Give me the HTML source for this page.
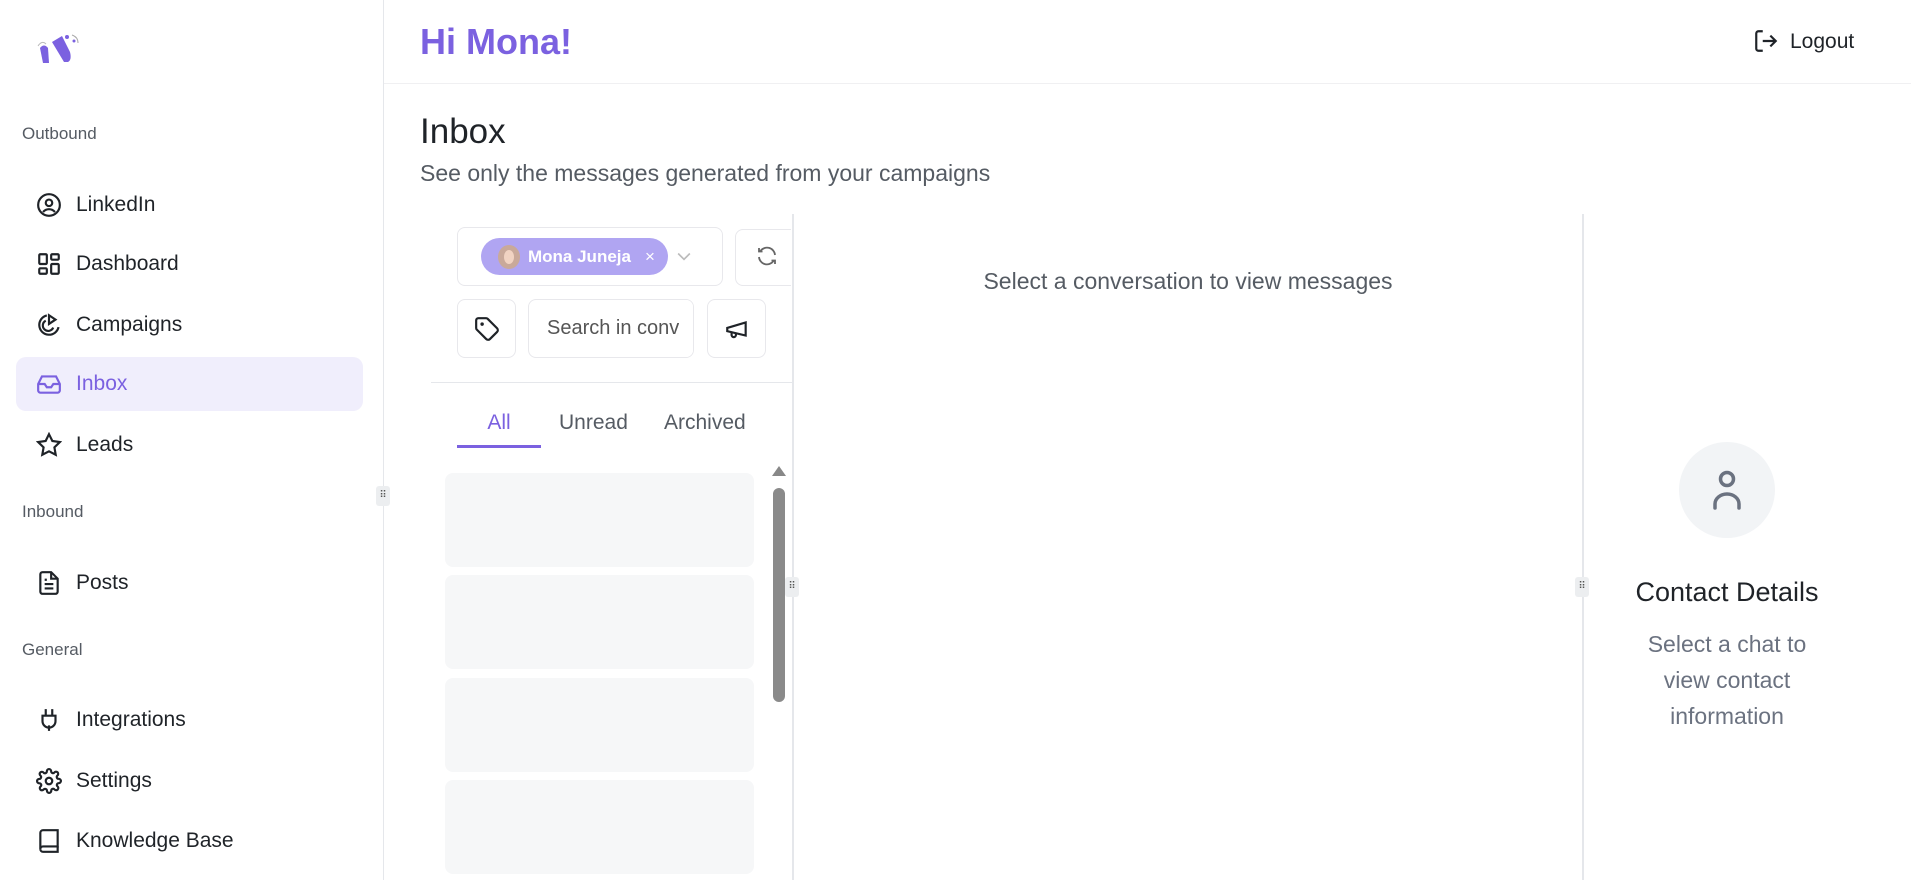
<!DOCTYPE html>
<html><head><meta charset="utf-8"><style>
*{margin:0;padding:0;box-sizing:border-box}
body{width:1911px;height:880px;overflow:hidden;background:#fff;font-family:"Liberation Sans",sans-serif;color:#1f2328;position:relative}
.a{position:absolute}
.lbl{position:absolute;left:22px;font-size:17px;color:#555b63}
.it{position:absolute;left:16px;width:347px;height:54px;display:flex;align-items:center;font-size:21px;color:#1f2328}
.it svg{position:absolute;left:20px;width:26px;height:26px}
.it span{position:absolute;left:60px}
.btn{position:absolute;border:1px solid #e8e8ec;border-radius:8px;background:#fff}
.sk{position:absolute;left:445px;width:309px;height:94px;background:#f6f7f8;border-radius:8px}
.hd{position:absolute;width:14px;height:20px;background:#eceef0;border-radius:3px;font-size:10px;color:#555;text-align:center;line-height:20px}
</style></head><body>
<!-- sidebar -->
<div class="a" style="left:383px;top:0;width:1px;height:880px;background:#e5e7eb"></div>
<svg class="a" style="left:34px;top:32px" width="50" height="34" viewBox="0 0 50 34"><path d="M4 14 q4-6 8-2" stroke="#bbb" fill="none" stroke-width="1"/><path d="M6 16 q4-5 8 0 l1 15 h-6z" fill="#7b61e0"/><path d="M18 10 l10-6 l8 16 q2 8 -2 10 h-4z" fill="#7b61e0"/><circle cx="33" cy="5" r="2" fill="#7b61e0"/><circle cx="40" cy="9" r="1.5" fill="#7b61e0"/><path d="M38 3 q6 2 6 8" stroke="#aaa" fill="none" stroke-width="1"/></svg>
<div class="lbl" style="top:124px">Outbound</div>
<div class="it" style="top:178px"><svg viewBox="0 0 24 24" fill="none" stroke="#1f2328" stroke-width="2"><circle cx="12" cy="12" r="10"/><circle cx="12" cy="10" r="3"/><path d="M6.5 18.5c3-3.5 8-3.5 11 0"/></svg><span>LinkedIn</span></div>
<div class="it" style="top:237px"><svg viewBox="0 0 24 24" fill="none" stroke="#1f2328" stroke-width="2"><rect x="3" y="3" width="7" height="9" rx="1"/><rect x="14" y="3" width="7" height="5" rx="1"/><rect x="14" y="12" width="7" height="9" rx="1"/><rect x="3" y="16" width="7" height="5" rx="1"/></svg><span>Dashboard</span></div>
<div class="it" style="top:298px"><svg viewBox="0 0 24 24" fill="none" stroke="#1f2328" stroke-width="2"><path d="M10 3.2A9 9 0 1 0 20.8 14"/><path d="M9 8a5 5 0 1 0 6.9 6.4"/><path d="M12 3v8l6-4z"/></svg><span>Campaigns</span></div>
<div class="it" style="top:357px;background:#f0eefc;border-radius:10px;color:#7b61e0"><svg viewBox="0 0 24 24" fill="none" stroke="#7b61e0" stroke-width="2"><path d="M22 12h-6l-2 3h-4l-2-3H2"/><path d="M5.5 5h13L22 12v6a2 2 0 0 1-2 2H4a2 2 0 0 1-2-2v-6z"/></svg><span>Inbox</span></div>
<div class="it" style="top:418px"><svg viewBox="0 0 24 24" fill="none" stroke="#1f2328" stroke-width="2"><path d="M12 2l3.1 6.3 6.9 1-5 4.9 1.2 6.8L12 17.8 5.8 21l1.2-6.8-5-4.9 6.9-1z"/></svg><span>Leads</span></div>
<div class="lbl" style="top:502px">Inbound</div>
<div class="it" style="top:556px"><svg viewBox="0 0 24 24" fill="none" stroke="#1f2328" stroke-width="2"><path d="M14 2H6a2 2 0 0 0-2 2v16a2 2 0 0 0 2 2h12a2 2 0 0 0 2-2V8z"/><path d="M14 2v6h6M16 13H8M16 17H8M10 9H8"/></svg><span>Posts</span></div>
<div class="lbl" style="top:640px">General</div>
<div class="it" style="top:693px"><svg viewBox="0 0 24 24" fill="none" stroke="#1f2328" stroke-width="2"><path d="M12 22v-5M9 8V2M15 8V2M18 8v5a6 6 0 0 1-12 0V8z"/></svg><span>Integrations</span></div>
<div class="it" style="top:754px"><svg viewBox="0 0 24 24" fill="none" stroke="#1f2328" stroke-width="2"><circle cx="12" cy="12" r="3"/><path d="M19.4 15a1.7 1.7 0 0 0 .3 1.8l.1.1a2 2 0 1 1-2.8 2.8l-.1-.1a1.7 1.7 0 0 0-1.8-.3 1.7 1.7 0 0 0-1 1.5V21a2 2 0 1 1-4 0v-.1a1.7 1.7 0 0 0-1.1-1.5 1.7 1.7 0 0 0-1.8.3l-.1.1a2 2 0 1 1-2.8-2.8l.1-.1a1.7 1.7 0 0 0 .3-1.8 1.7 1.7 0 0 0-1.5-1H3a2 2 0 1 1 0-4h.1a1.7 1.7 0 0 0 1.5-1.1 1.7 1.7 0 0 0-.3-1.8l-.1-.1a2 2 0 1 1 2.8-2.8l.1.1a1.7 1.7 0 0 0 1.8.3H9a1.7 1.7 0 0 0 1-1.5V3a2 2 0 1 1 4 0v.1a1.7 1.7 0 0 0 1 1.5 1.7 1.7 0 0 0 1.8-.3l.1-.1a2 2 0 1 1 2.8 2.8l-.1.1a1.7 1.7 0 0 0-.3 1.8V9a1.7 1.7 0 0 0 1.5 1H21a2 2 0 1 1 0 4h-.1a1.7 1.7 0 0 0-1.5 1z"/></svg><span>Settings</span></div>
<div class="it" style="top:814px"><svg viewBox="0 0 24 24" fill="none" stroke="#1f2328" stroke-width="2"><path d="M4 19.5A2.5 2.5 0 0 1 6.5 17H20V2H6.5A2.5 2.5 0 0 0 4 4.5z"/><path d="M4 19.5A2.5 2.5 0 0 0 6.5 22H20v-5"/></svg><span>Knowledge Base</span></div>
<div class="hd" style="left:376px;top:486px">⠿</div>
<!-- header -->
<div class="a" style="left:384px;top:83px;width:1527px;height:1px;background:#f0f0f2"></div>
<div class="a" style="left:420px;top:21px;font-size:36px;font-weight:bold;color:#7b61e0">Hi Mona!</div>
<svg class="a" style="left:1753px;top:28px" width="26" height="26" viewBox="0 0 24 24" fill="none" stroke="#1f2328" stroke-width="2"><path d="M9 21H5a2 2 0 0 1-2-2V5a2 2 0 0 1 2-2h4M16 17l5-5-5-5M21 12H9"/></svg>
<div class="a" style="left:1790px;top:30px;font-size:21px">Logout</div>
<div class="a" style="left:420px;top:112px;font-size:35px">Inbox</div>
<div class="a" style="left:420px;top:160px;font-size:23px;color:#555b63">See only the messages generated from your campaigns</div>
<!-- list column -->
<div class="a" style="left:792px;top:214px;width:2px;height:666px;background:#e5e7eb"></div>
<div class="a" style="left:1582px;top:214px;width:2px;height:666px;background:#e5e7eb"></div>
<div class="btn" style="left:457px;top:227px;width:266px;height:59px"></div>
<div class="a" style="left:481px;top:238px;width:187px;height:37px;border-radius:19px;background:#b0a5f2;display:flex;align-items:center">
  <div style="margin-left:17px;width:22px;height:24px;border-radius:50%;background:#c9a99a;overflow:hidden"><div style="margin:5px auto 0;width:10px;height:14px;border-radius:50%;background:#f1d3c2"></div></div>
  <div style="margin-left:8px;font-size:17px;font-weight:bold;color:#fff">Mona Juneja</div>
  <div style="margin-left:14px;font-size:17px;color:#fff">×</div>
</div>
<svg class="a" style="left:673px;top:246px" width="22" height="20" viewBox="0 0 24 24" fill="none" stroke="#bbb" stroke-width="2"><path d="M5 9l7 7 7-7"/></svg>
<div class="a" style="left:735px;top:227px;width:56px;height:62px;overflow:hidden">
  <div class="btn" style="left:0;top:2px;width:80px;height:57px"></div>
  <svg class="a" style="left:20px;top:17px" width="24" height="24" viewBox="0 0 24 24" fill="none" stroke="#666" stroke-width="1.8"><path d="M20 11A8 8 0 0 0 5.5 7M4 4v3.5h3.5M4 13a8 8 0 0 0 14.5 4M20 20v-3.5h-3.5"/></svg>
</div>
<div class="btn" style="left:457px;top:299px;width:59px;height:59px"></div>
<svg class="a" style="left:474px;top:316px" width="26" height="26" viewBox="0 0 24 24" fill="none" stroke="#1f2328" stroke-width="2"><path d="M12.6 2.6A2 2 0 0 0 11.2 2H4a2 2 0 0 0-2 2v7.2a2 2 0 0 0 .6 1.4l8.7 8.7a2.4 2.4 0 0 0 3.4 0l6.6-6.6a2.4 2.4 0 0 0 0-3.4z"/><circle cx="7.5" cy="7.5" r=".6" fill="#1f2328"/></svg>
<div class="btn" style="left:528px;top:299px;width:166px;height:59px;overflow:hidden"><div style="position:absolute;left:18px;top:17px;font-size:20px;color:#555;white-space:nowrap">Search in conv</div><div style="position:absolute;right:0;top:0;width:14px;height:57px;background:#fff"></div></div>
<div class="btn" style="left:707px;top:299px;width:59px;height:59px"></div>
<svg class="a" style="left:724px;top:316px" width="26" height="26" viewBox="0 0 24 24" fill="none" stroke="#1f2328" stroke-width="2"><path d="M3 11l17-5v12L3 14z"/><path d="M7 14.5v3a2 2 0 0 0 4 0v-1.7"/></svg>
<div class="a" style="left:431px;top:382px;width:361px;height:1px;background:#e5e7eb"></div>
<div class="a" style="left:457px;top:411px;width:84px;text-align:center;font-size:21px;color:#7b61e0">All</div>
<div class="a" style="left:457px;top:445px;width:84px;height:3px;background:#7b61e0"></div>
<div class="a" style="left:559px;top:411px;font-size:21px;color:#555b63">Unread</div>
<div class="a" style="left:664px;top:411px;font-size:21px;color:#555b63">Archived</div>
<div class="a" style="left:772px;top:466px;width:0;height:0;border-left:7px solid transparent;border-right:7px solid transparent;border-bottom:10px solid #888"></div>
<div class="a" style="left:773px;top:488px;width:12px;height:214px;border-radius:6px;background:#8a8a8a"></div>
<div class="sk" style="top:473px"></div><div class="sk" style="top:575px"></div><div class="sk" style="top:678px"></div><div class="sk" style="top:780px"></div>
<div class="hd" style="left:785px;top:577px">⠿</div>
<div class="hd" style="left:1575px;top:577px">⠿</div>
<!-- middle -->
<div class="a" style="left:794px;top:268px;width:788px;text-align:center;font-size:23px;color:#555b63">Select a conversation to view messages</div>
<!-- right -->
<div class="a" style="left:1679px;top:442px;width:96px;height:96px;border-radius:50%;background:#f2f4f6"></div>
<svg class="a" style="left:1709px;top:468px" width="36" height="44" viewBox="0 0 36 44" fill="none" stroke="#6b7280" stroke-width="3.5" stroke-linecap="round"><circle cx="18" cy="11" r="6.5"/><path d="M6 40v-4a12 10 0 0 1 24 0v4"/></svg>
<div class="a" style="left:1584px;top:577px;width:286px;text-align:center;font-size:27px;color:#1f2328">Contact Details</div>
<div class="a" style="left:1584px;top:626px;width:286px;text-align:center;font-size:23px;line-height:36px;color:#6b7280">Select a chat to<br>view contact<br>information</div>
</body></html>
